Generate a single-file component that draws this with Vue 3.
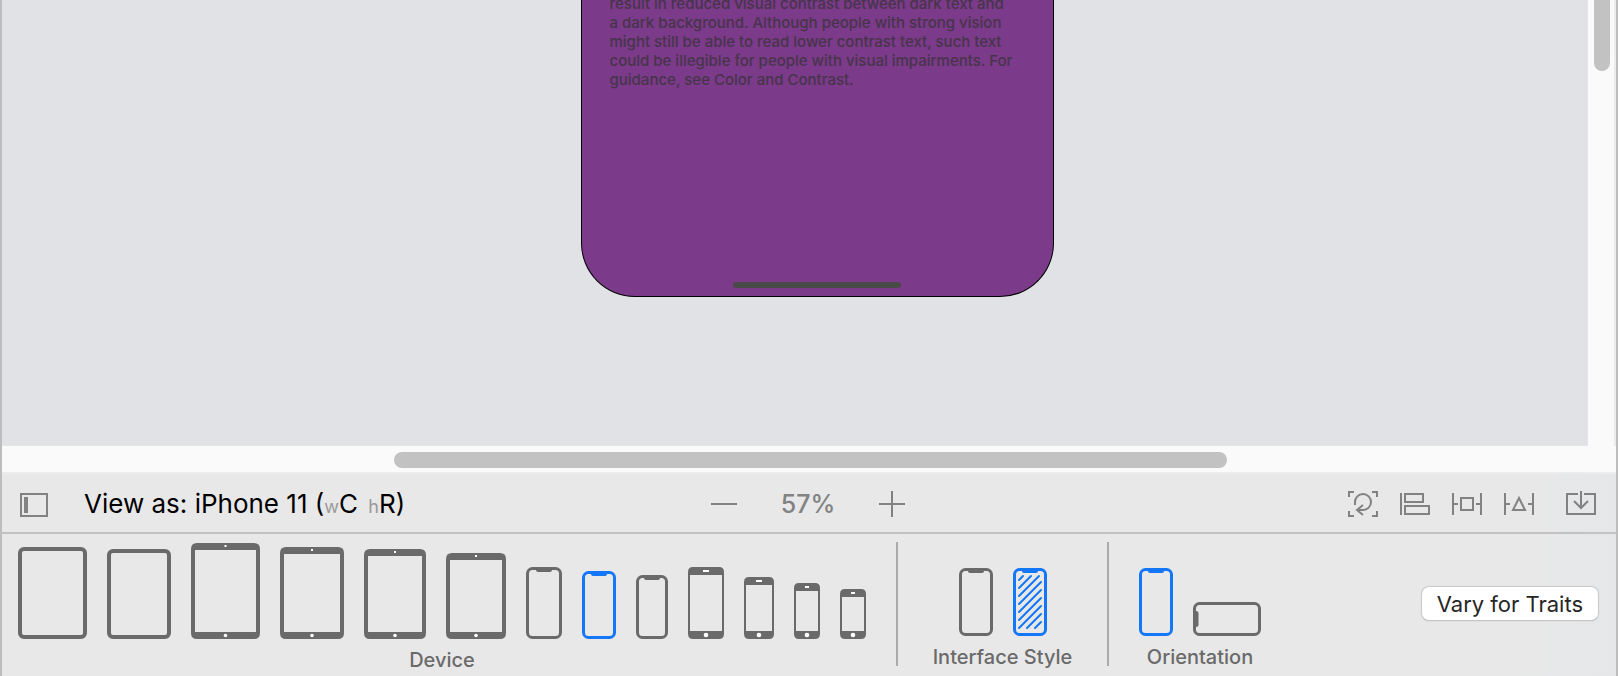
<template>
  <main class="editor">
    <section class="workspace">
      <div class="canvas">
        <article class="phone">
          <p class="phone-text">
            result in reduced visual contrast between dark text and<br>
            a dark background. Although people with strong vision<br>
            might still be able to read lower contrast text, such text<br>
            could be illegible for people with visual impairments. For<br>
            guidance, see Color and Contrast.
          </p>
          <div class="home-indicator"></div>
        </article>
      </div>
      <div class="scroll-y"><div class="thumb-y"></div></div>
      <div class="scroll-x"><div class="thumb-x"></div></div>
    </section>

    <header class="toolbar">
      <div class="toolbar-left">
        <button class="icon-btn" aria-label="Toggle outline">
          <svg width="28" height="24" viewBox="0 0 28 24">
            <rect x="1" y="1" width="26" height="22" fill="none" stroke="#828282" stroke-width="2" />
            <rect x="4" y="4" width="4" height="16" fill="#828282" />
          </svg>
        </button>
        <button class="view-as">View as: iPhone 11 (<small>w</small>C <small class="height-class">h</small>R)</button>
      </div>

      <div class="zoom">
        <button class="icon-btn" aria-label="Zoom out" @click="zoom--">
          <svg width="26" height="26" viewBox="0 0 26 26"><path d="M0 13H26" /></svg>
        </button>
        <output class="zoom-value">{{ zoom }}%</output>
        <button class="icon-btn" aria-label="Zoom in" @click="zoom++">
          <svg width="26" height="26" viewBox="0 0 26 26"><path d="M0 13H26M13 0V26" /></svg>
        </button>
      </div>

      <div class="toolbar-right">
        <button v-for="tool in tools" :key="tool.name" class="icon-btn" :class="tool.name" :aria-label="tool.label">
          <svg width="30" height="26" viewBox="0 0 30 26"><path :d="tool.path" /></svg>
        </button>
      </div>
    </header>

    <section class="traits">
      <div class="group devices">
        <div class="options">
          <button
            v-for="(d, i) in devices"
            :key="i"
            class="device"
            :class="{ active: device === i }"
            :aria-label="d.name"
            @click="device = i"
          >
            <svg :width="d.w" :height="d.h" :viewBox="`0 0 ${d.w} ${d.h}`">
              <rect v-if="d.kind === 'pro'" class="line" x="2" y="2" :width="d.w - 4" :height="d.h - 4" rx="4" stroke-width="4" />
              <template v-else-if="d.kind === 'pad'">
                <path class="solid" fill-rule="evenodd" :d="frame(d.w, d.h, 6, 4, 7)" />
                <rect class="hole" :x="d.w / 2 - 1" y="2" width="2" height="2" />
                <circle class="hole" :cx="d.w / 2" :cy="d.h - 3.5" r="1.8" />
              </template>
              <template v-else-if="d.kind === 'home'">
                <path class="solid" fill-rule="evenodd" :d="frame(d.w, d.h, 5, 2, 8)" />
                <rect class="hole" :x="d.w / 2 - (d.w > 26 ? 3 : 2)" y="3" :width="d.w > 26 ? 6 : 4" height="2" />
                <circle class="hole" :cx="d.w / 2" :cy="d.h - 4" r="2.3" />
              </template>
              <template v-else>
                <rect class="line" x="1.5" y="1.5" :width="d.w - 3" :height="d.h - 3" rx="5" stroke-width="3" />
                <path class="solid" :d="notch(d.w)" />
              </template>
            </svg>
          </button>
        </div>
        <span class="label">Device</span>
      </div>

      <div class="group styles">
        <div class="options">
          <button
            v-for="s in ['light', 'dark']"
            :key="s"
            class="device"
            :class="{ active: style === s }"
            :aria-label="s"
            @click="style = s"
          >
            <svg width="34" height="68" viewBox="0 0 34 68">
              <rect class="line" x="1.5" y="1.5" width="31" height="65" rx="5" stroke-width="3" />
              <path class="solid" :d="notch(34)" />
              <path
                v-if="s === 'dark'"
                class="line"
                stroke-width="2"
                stroke-linecap="round"
                d="M6 12L10 8M6 20L18 8M6 28L26 8M6 36L28 14M6 44L28 22M6 52L28 30M6 60L28 38M14 60L28 46M22 60L28 54"
              />
            </svg>
          </button>
        </div>
        <span class="label">Interface Style</span>
      </div>

      <div class="group orientations">
        <div class="options">
          <button class="device" :class="{ active: !landscape }" aria-label="Portrait" @click="landscape = false">
            <svg width="34" height="68" viewBox="0 0 34 68">
              <rect class="line" x="1.5" y="1.5" width="31" height="65" rx="5" stroke-width="3" />
              <path class="solid" :d="notch(34)" />
            </svg>
          </button>
          <button class="device" :class="{ active: landscape }" aria-label="Landscape" @click="landscape = true">
            <svg width="68" height="34" viewBox="0 0 68 34">
              <rect class="line" x="1.5" y="1.5" width="65" height="31" rx="5" stroke-width="3" />
              <path class="solid" d="M2 9H3Q5.500 9 5.500 11V23Q5.500 25 3 25H2Z" />
            </svg>
          </button>
        </div>
        <span class="label">Orientation</span>
      </div>

      <button class="vary">Vary for Traits</button>
    </section>
  </main>
</template>

<script setup>
import { ref } from 'vue'

const zoom = ref(57)
const device = ref(7)
const style = ref('dark')
const landscape = ref(false)

const devices = [
  { name: 'iPad Pro 12.9"', kind: 'pro', w: 69, h: 92 },
  { name: 'iPad Pro 11"', kind: 'pro', w: 64, h: 90 },
  { name: 'iPad Pro 12.9" (2nd generation)', kind: 'pad', w: 69, h: 96 },
  { name: 'iPad Pro 10.5"', kind: 'pad', w: 64, h: 92 },
  { name: 'iPad 10.2"', kind: 'pad', w: 62, h: 90 },
  { name: 'iPad 9.7"', kind: 'pad', w: 60, h: 86 },
  { name: 'iPhone 11 Pro Max', kind: 'notch', w: 36, h: 72 },
  { name: 'iPhone 11', kind: 'notch', w: 34, h: 68 },
  { name: 'iPhone 11 Pro', kind: 'notch', w: 32, h: 64 },
  { name: 'iPhone 8 Plus', kind: 'home', w: 36, h: 72 },
  { name: 'iPhone 8', kind: 'home', w: 30, h: 62 },
  { name: 'iPhone SE', kind: 'home', w: 26, h: 56 },
  { name: 'iPhone 4s', kind: 'home', w: 26, h: 50 }
]

const tools = [
  {
    name: 'update',
    label: 'Update frames',
    path: 'M0 1H6M1 0V6M24 1H30M29 0V6M0 25H6M1 20V26M24 25H30M29 20V26M7 14V11A8 8 0 1 1 15 19H9M15 14L9 19L15 24'
  },
  {
    name: 'align',
    label: 'Align',
    path: 'M1 2V24M5 3H23V11H5ZM5 15H29V23H5Z'
  },
  {
    name: 'pin',
    label: 'Add new constraints',
    path: 'M1 2V24M29 2V24M1 13H6M24 13H29M9 7H21V19H9Z'
  },
  {
    name: 'resolve',
    label: 'Resolve auto layout issues',
    path: 'M1 2V24M29 2V24M1 13H6M24 13H29M15 7L21 19H9Z'
  },
  {
    name: 'embed',
    label: 'Embed in',
    path: 'M12 3H1V23H29V3H18M15 0V17M8 10L15 17L22 10'
  }
]

// outer rounded body with the screen cut out
function frame(w, h, r, side, bar) {
  return `M${r} 0H${w - r}Q${w} 0 ${w} ${r}V${h - r}Q${w} ${h} ${w - r} ${h}H${r}Q0 ${h} 0 ${h - r}V${r}Q0 0 ${r} 0Z` +
    `M${side} ${bar}V${h - bar}H${w - side}V${bar}Z`
}

function notch(w) {
  const c = w / 2
  return `M${c - 8} 2V3Q${c - 8} 5 ${c - 6} 5H${c + 6}Q${c + 8} 5 ${c + 8} 3V2Z`
}
</script>

<style>
body {
  margin: 0;
  background: #e8e8e8;
}
</style>

<style scoped>
.editor {
  display: flex;
  flex-direction: column;
  box-sizing: border-box;
  min-height: 100vh;
  border: solid #bdbdbd;
  border-width: 0 2px;
  background: linear-gradient(to right, #e8e8e8 92%, #e6e7e9);
  font-family: Inter, "Liberation Sans", sans-serif;
  overflow: hidden;
}

button {
  margin: 0;
  padding: 0;
  border: 0;
  background: none;
  font-family: inherit;
}

svg {
  display: block;
}

.workspace {
  display: grid;
  grid-template-columns: 1fr 28px;
  grid-template-rows: 1fr 28px;
  flex: 1;
  overflow: hidden;
}

.canvas {
  display: flex;
  justify-content: center;
  align-items: flex-start;
  padding: 0 0 148px 45px;
  border: solid #e6e6e6;
  border-width: 0 1px 1px 0;
  background: #e1e2e6;
}

.phone {
  display: flex;
  flex-direction: column;
  justify-content: space-between;
  align-items: center;
  box-sizing: border-box;
  width: 473px;
  height: 303px;
  margin-top: -6px;
  padding-bottom: 8px;
  border: solid #000;
  border-width: 0 1px 1px;
  border-radius: 0 0 54px 54px;
  background: #7b3a8a;
}

.phone-text {
  align-self: stretch;
  margin: 0 0 0 28px;
  color: #463549;
  font-size: 15px;
  font-weight: 500;
  line-height: 19px;
  white-space: nowrap;
}

.home-indicator {
  width: 168px;
  height: 6px;
  border-radius: 3px;
  background: #4a4a4a;
}

.scroll-y {
  display: flex;
  justify-content: center;
  padding-left: 2px;
  border-right: 2px solid #ececec;
  background: #fafafa;
}

.thumb-y {
  width: 16px;
  height: 71px;
  border-radius: 0 0 8px 8px;
  background: #c2c2c2;
}

.scroll-x {
  grid-column: 1 / 3;
  display: flex;
  align-items: center;
  padding-top: 2px;
  border-bottom: 2px solid #ececec;
  background: #fafafa;
}

.thumb-x {
  width: 833px;
  height: 16px;
  margin-left: 392px;
  border-radius: 8px;
  background: #c2c2c2;
}

.toolbar {
  display: grid;
  grid-template-columns: 1fr auto 1fr;
  align-items: center;
  height: 56px;
  padding: 2px 20px 0 18px;
  border-bottom: 2px solid #c2c2c2;
}

.toolbar-left,
.toolbar-right,
.zoom {
  display: flex;
  align-items: center;
}

.toolbar-left {
  gap: 36px;
  padding-top: 2px;
}

.toolbar-right {
  justify-content: flex-end;
  gap: 22px;
}

.icon-btn path {
  fill: none;
  stroke: #828282;
  stroke-width: 2;
}

.embed {
  margin-left: 10px;
}

.view-as {
  color: #000;
  font-size: 26px;
  line-height: 32px;
  white-space: nowrap;
}

.view-as small {
  color: #999;
  font-size: 18px;
}

.height-class {
  margin-left: 3px;
}

.zoom-value {
  width: 142px;
  color: #828282;
  font-size: 25px;
  font-weight: 500;
  line-height: 32px;
  text-align: center;
}

.traits {
  display: flex;
  align-items: flex-start;
  padding: 8px 18px 10px 16px;
}

.group {
  display: flex;
  flex-direction: column;
  align-items: center;
  box-sizing: border-box;
  height: 124px;
}

.options {
  display: flex;
  flex: none;
  align-items: flex-end;
  gap: 20px;
  height: 94px;
}

.devices {
  padding-right: 30px;
}

.devices .options {
  height: 97px;
}

.styles {
  width: 213px;
  border: solid #aaa;
  border-width: 0 2px;
}

.orientations {
  padding-left: 30px;
}

.label {
  margin-top: 9px;
  color: #6a6a6a;
  font-size: 20px;
  font-weight: 500;
  line-height: 24px;
  white-space: nowrap;
}

.device {
  color: #6a6a6a;
}

.device.active {
  color: #1477f8;
}

.line {
  fill: none;
  stroke: currentColor;
}

.solid {
  fill: currentColor;
}

.hole {
  fill: #fff;
}

.vary {
  height: 33px;
  margin: 45px 0 0 auto;
  padding: 0 15px;
  border-radius: 7px;
  background: #fff;
  box-shadow: 0 0 1px 1px #c8c8c8, 0 1px 1px #aaa;
  color: #262626;
  font-size: 22px;
  line-height: 32px;
  white-space: nowrap;
}
</style>
